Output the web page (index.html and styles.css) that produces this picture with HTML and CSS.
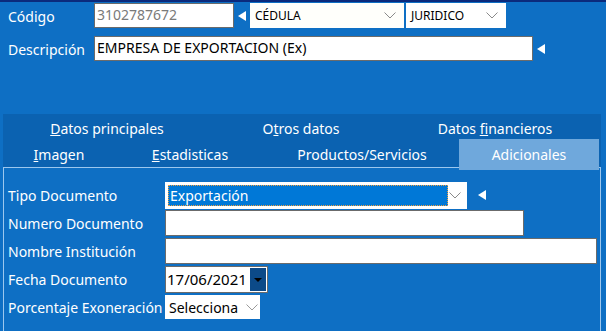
FILE: index.html
```html
<!DOCTYPE html>
<html lang="es">
<head>
  <meta charset="UTF-8">
  <title>Cliente</title>
  <link rel="stylesheet" href="styles.css">
</head>
<body>

  <div class="header">
    <div class="row">
      <label class="lbl">Código</label>
      <div class="box code">3102787672</div>
      <span class="mark"></span>
      <div class="combo cedula">CÉDULA <svg class="chev" width="12" height="7" viewBox="0 0 12 7"><path d="M0.5 0.5 L6 6 L11.5 0.5" fill="none" stroke="#8a8a8a"/></svg></div>
      <div class="combo tipo">JURIDICO <svg class="chev" width="12" height="7" viewBox="0 0 12 7"><path d="M0.5 0.5 L6 6 L11.5 0.5" fill="none" stroke="#8a8a8a"/></svg></div>
    </div>
    <div class="row">
      <label class="lbl">Descripción</label>
      <div class="box desc">EMPRESA DE EXPORTACION (Ex)</div>
      <span class="mark"></span>
    </div>
  </div>

  <div class="tabs">
    <div class="tabrow top">
      <div class="tab"><u>D</u>atos principales</div>
      <div class="tab">O<u>t</u>ros datos</div>
      <div class="tab">Datos <u>f</u>inancieros</div>
    </div>
    <div class="tabrow bottom">
      <div class="tab"><u>I</u>magen</div>
      <div class="tab"><u>E</u>stadisticas</div>
      <div class="tab">Productos/Servicios</div>
      <div class="tab active">Adicionales</div>
    </div>

    <div class="panel">
      <div class="frow">
        <label class="flbl">Tipo Documento</label>
        <div class="combo doc">
          <span class="sel">Exportación</span>
          <svg class="chev" width="12" height="7" viewBox="0 0 12 7"><path d="M0.5 0.5 L6 6 L11.5 0.5" fill="none" stroke="#8a8a8a"/></svg>
        </div>
        <span class="mark"></span>
      </div>
      <div class="frow">
        <label class="flbl">Numero Documento</label>
        <div class="box num"></div>
      </div>
      <div class="frow">
        <label class="flbl">Nombre Institución</label>
        <div class="box inst"></div>
      </div>
      <div class="frow">
        <label class="flbl">Fecha Documento</label>
        <div class="box date">17/06/2021<span class="drop"></span></div>
      </div>
      <div class="frow">
        <label class="flbl">Porcentaje Exoneración</label>
        <div class="combo pct">Selecciona <svg class="chev" width="12" height="7" viewBox="0 0 12 7"><path d="M0.5 0.5 L6 6 L11.5 0.5" fill="none" stroke="#9a9a9a"/></svg></div>
      </div>
    </div>
  </div>

</body>
</html>
```

FILE: styles.css
```css
body {
  margin: 0;
  height: 329px;
  background: #0e6fc4;
  border-top: 2px solid #0b2a7c;
  font-family: "Noto Sans", "Open Sans", sans-serif;
  font-size: 14px;
  color: #fff;
  overflow: hidden;
}
.header {
  padding: 1px 0 0 8px;
}
.row {
  display: flex;
  align-items: center;
  height: 25px;
  margin-bottom: 8px;
}
.lbl {
  width: 86px;
  padding-top: 2px;
}
.box {
  box-sizing: border-box;
  height: 25px;
  background: #fff;
  border: 1px solid #6b6b6b;
  color: #000;
  padding: 0 2px;
  line-height: 22px;
  white-space: nowrap;
}
.code {
  width: 140px;
  color: #7a7a7a;
}
.desc {
  width: 439px;
}
.mark {
  width: 0;
  height: 0;
  border-top: 5px solid transparent;
  border-bottom: 5px solid transparent;
  border-right: 8px solid #fff;
  margin: 0 4px 0 4px;
}
.combo {
  box-sizing: border-box;
  height: 25px;
  background: #fff;
  color: #000;
  display: flex;
  align-items: center;
  justify-content: space-between;
  padding: 0 8px 0 5px;
  font-size: 12px;
}
.chev {
  flex: none;
}
.cedula {
  width: 154px;
  background: #fffffb;
}
.tipo {
  width: 100px;
  margin-left: 2px;
}

.tabs {
  margin: 53px 0 0 3px;
  width: 598px;
}
.tabrow {
  display: grid;
  background: #0b62b1;
}
.tabrow.top {
  grid-template-columns: 208px 180px 208px;
  height: 25px;
}
.tabrow.bottom {
  grid-template-columns: 112px 150px 194px 140px;
  height: 28px;
}
.tab {
  text-align: center;
  line-height: 29px;
}
.tabrow.bottom .tab {
  line-height: 31px;
}
.tab.active {
  background: #6fa8dc;
}
.panel {
  box-sizing: border-box;
  height: 170px;
  border: 1px solid #9cc7ee;
  border-bottom: none;
  padding: 13px 0 0 4px;
}
.frow {
  display: flex;
  align-items: center;
  height: 28px;
}
.flbl {
  width: 157px;
}
.doc {
  width: 302px;
  height: 27px;
  padding: 3px 6px 3px 3px;
  font-size: 14px;
}
.sel {
  box-sizing: border-box;
  width: 280px;
  height: 21px;
  background: #0078d7;
  color: #fff;
  border: 1px dotted #f0a040;
  line-height: 19px;
  padding-left: 1px;
}
.doc + .mark {
  margin-left: 11px;
}
.num {
  width: 359px;
  height: 26px;
}
.inst {
  width: 432px;
  height: 26px;
}
.date {
  width: 103px;
  height: 27px;
  position: relative;
  font-size: 15px;
  line-height: 24px;
  padding-left: 1px;
}
.drop {
  position: absolute;
  right: 1px;
  top: 1px;
  width: 16px;
  height: 23px;
  background: #0c4a88;
}
.drop::after {
  content: "";
  position: absolute;
  left: 4px;
  top: 10px;
  border-left: 4px solid transparent;
  border-right: 4px solid transparent;
  border-top: 4px solid #000;
}
.pct {
  width: 95px;
  height: 24px;
  font-size: 14px;
  padding: 0 2px 0 4px;
}
```
